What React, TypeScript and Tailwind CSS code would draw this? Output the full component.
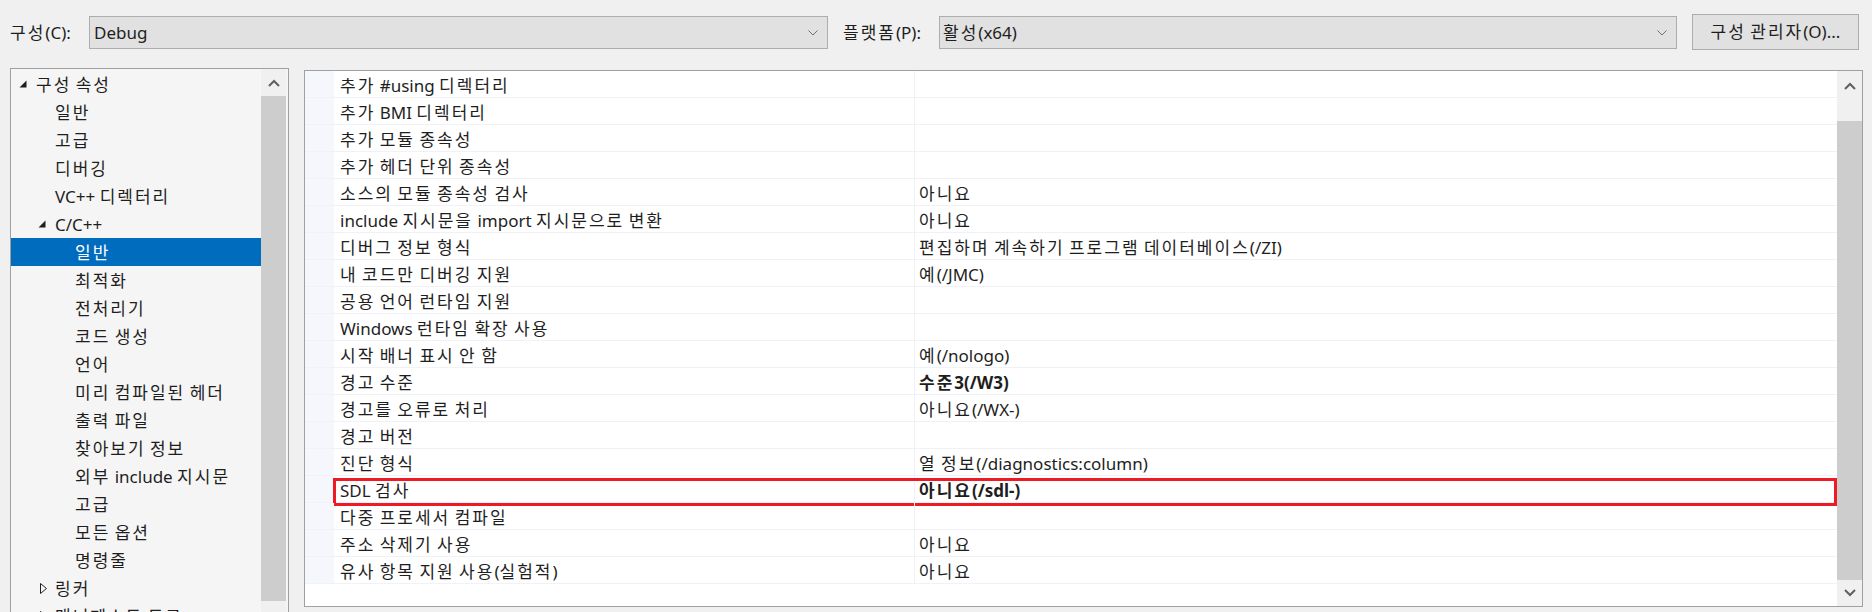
import React from "react";

type TreeItem = { label: string; level: number; exp?: "open" | "closed"; selected?: boolean };

const tree: TreeItem[] = [
  { label: "구성 속성", level: 0, exp: "open" },
  { label: "일반", level: 1 },
  { label: "고급", level: 1 },
  { label: "디버깅", level: 1 },
  { label: "VC++ 디렉터리", level: 1 },
  { label: "C/C++", level: 1, exp: "open" },
  { label: "일반", level: 2, selected: true },
  { label: "최적화", level: 2 },
  { label: "전처리기", level: 2 },
  { label: "코드 생성", level: 2 },
  { label: "언어", level: 2 },
  { label: "미리 컴파일된 헤더", level: 2 },
  { label: "출력 파일", level: 2 },
  { label: "찾아보기 정보", level: 2 },
  { label: "외부 include 지시문", level: 2 },
  { label: "고급", level: 2 },
  { label: "모든 옵션", level: 2 },
  { label: "명령줄", level: 2 },
  { label: "링커", level: 1, exp: "closed" },
  { label: "매니페스트 도구", level: 1, exp: "closed" },
];

type Row = { label: string; value?: string; bold?: boolean; boxed?: boolean };

const rows: Row[] = [
  { label: "추가 #using 디렉터리" },
  { label: "추가 BMI 디렉터리" },
  { label: "추가 모듈 종속성" },
  { label: "추가 헤더 단위 종속성" },
  { label: "소스의 모듈 종속성 검사", value: "아니요" },
  { label: "include 지시문을 import 지시문으로 변환", value: "아니요" },
  { label: "디버그 정보 형식", value: "편집하며 계속하기 프로그램 데이터베이스(/ZI)" },
  { label: "내 코드만 디버깅 지원", value: "예(/JMC)" },
  { label: "공용 언어 런타임 지원" },
  { label: "Windows 런타임 확장 사용" },
  { label: "시작 배너 표시 안 함", value: "예(/nologo)" },
  { label: "경고 수준", value: "수준3(/W3)", bold: true },
  { label: "경고를 오류로 처리", value: "아니요(/WX-)" },
  { label: "경고 버전" },
  { label: "진단 형식", value: "열 정보(/diagnostics:column)" },
  { label: "SDL 검사", value: "아니요(/sdl-)", bold: true, boxed: true },
  { label: "다중 프로세서 컴파일" },
  { label: "주소 삭제기 사용", value: "아니요" },
  { label: "유사 항목 지원 사용(실험적)", value: "아니요" },
];

const HANGUL = /([\uac00-\ud7a3]+)/;

/** Text whose Hangul runs are spaced out, as the reference's UI font renders them. */
function T({ s }: { s: string }) {
  const parts = s.split(HANGUL);
  return (
    <span className="whitespace-pre">
      {parts.map((p, i) =>
        HANGUL.test(p) ? (
          <span key={i} className="tracking-[2px]">
            {p}
          </span>
        ) : (
          <React.Fragment key={i}>{p}</React.Fragment>
        )
      )}
    </span>
  );
}

function ChevronUp() {
  return (
    <svg width="12" height="8" viewBox="0 0 12 8">
      <polyline points="1,7 6,2 11,7" fill="none" stroke="#606060" strokeWidth="2" />
    </svg>
  );
}
function ChevronDown() {
  return (
    <svg width="12" height="8" viewBox="0 0 12 8">
      <polyline points="1,1 6,6 11,1" fill="none" stroke="#606060" strokeWidth="2" />
    </svg>
  );
}
function ComboChevron() {
  return (
    <svg width="10" height="6" viewBox="0 0 10 6">
      <polyline points="0.5,0.5 5,5 9.5,0.5" fill="none" stroke="#707070" strokeWidth="1" />
    </svg>
  );
}

function Expander({ kind }: { kind?: "open" | "closed" }) {
  return (
    <div className="w-[19px] h-full flex items-center shrink-0">
      {kind === "open" && (
        <svg width="8" height="8" viewBox="0 0 8 8" className="ml-[2px]">
          <polygon points="7.5,0.5 7.5,7.5 0.5,7.5" fill="#1e1e1e" />
        </svg>
      )}
      {kind === "closed" && (
        <svg width="7" height="11" viewBox="0 0 7 11" className="ml-[4px]">
          <polygon points="0.5,0.5 6.5,5.5 0.5,10.5" fill="none" stroke="#1e1e1e" strokeWidth="1" />
        </svg>
      )}
    </div>
  );
}

export default function App() {
  return (
    <div className="w-[1872px] h-[612px] overflow-hidden bg-[#f0f0f0] font-['Noto_Sans','Noto_Sans_CJK_KR',sans-serif] text-[17px] text-[#1e1e1e]">
      {/* top bar */}
      <div className="h-[65px] flex items-center pl-[10px]">
        <div className="w-[79px] leading-none">
          <T s="구성(C):" />
        </div>
        <div className="w-[739px] h-[33px] bg-[#e1e1e1] border border-[#adadad] flex items-center pl-[4px] pr-[9px]">
          <span className="flex-1">Debug</span>
          <ComboChevron />
        </div>
        <div className="w-[111px] pl-[15px] leading-none">
          <T s="플랫폼(P):" />
        </div>
        <div className="w-[738px] h-[33px] bg-[#e1e1e1] border border-[#adadad] flex items-center pl-[3px] pr-[9px]">
          <span className="flex-1">
            <T s="활성(x64)" />
          </span>
          <ComboChevron />
        </div>
        <div className="ml-[15px] mt-[-2px] w-[167px] h-[36px] bg-[#e1e1e1] border border-[#adadad] flex items-center justify-center">
          <T s="구성 관리자(O)..." />
        </div>
      </div>

      {/* main */}
      <div className="flex pl-[10px] pt-[3px] gap-[15px]">
        {/* tree panel */}
        <div className="w-[279px] h-[600px] border border-[#a0a0a0] bg-[#f5f5f5] flex pr-[2px]">
          <div className="flex-1 pt-[1px]">
            {tree.map((t, i) => (
              <div
                key={i}
                className={`h-[28px] flex items-center ${t.selected ? "bg-[#006cbe] text-white" : ""} ${
                  t.level === 0 ? "pl-[6px]" : t.level === 1 ? "pl-[25px]" : "pl-[45px]"
                }`}
              >
                <Expander kind={t.exp} />
                <span className="leading-none">
                  <T s={t.label} />
                </span>
              </div>
            ))}
          </div>
          <div className="w-[25px] flex flex-col">
            <div className="h-[27px] bg-[#f0f0f0] flex items-center justify-center">
              <ChevronUp />
            </div>
            <div className="h-[505px] bg-[#cdcdcd]" />
            <div className="flex-1 bg-[#f0f0f0]" />
          </div>
        </div>

        {/* grid panel */}
        <div className="mt-[2px] w-[1559px] h-[537px] border border-[#a0a0a0] bg-white flex">
          <div className="flex-1 flex flex-col">
            {rows.map((r, i) => (
              <div key={i} className="relative h-[27px] flex border-b border-[#f0f2f7]">
                <div className="w-[29px] bg-[#f5f7fc] shrink-0" />
                <div className="w-[581px] shrink-0 border-r border-[#f0f2f7] flex items-center pl-[6px] pt-[4px]">
                  <T s={r.label} />
                </div>
                <div className={`flex-1 flex items-center pl-[4px] pt-[4px] ${r.bold ? "font-bold" : ""}`}>
                  {r.value ? <T s={r.value} /> : null}
                </div>
                {r.boxed && (
                  <div className="absolute left-[28px] right-0 top-[2px] h-[28px] border-[3px] border-[#ed1c24] pointer-events-none" />
                )}
              </div>
            ))}
          </div>
          <div className="w-[25px] flex flex-col">
            <div className="h-[29px] bg-[#f0f0f0] flex items-center justify-center">
              <ChevronUp />
            </div>
            <div className="h-[21px] bg-[#f0f0f0]" />
            <div className="flex-1 bg-[#cdcdcd]" />
            <div className="h-[26px] bg-[#f0f0f0] flex items-center justify-center">
              <ChevronDown />
            </div>
          </div>
        </div>
      </div>
    </div>
  );
}
